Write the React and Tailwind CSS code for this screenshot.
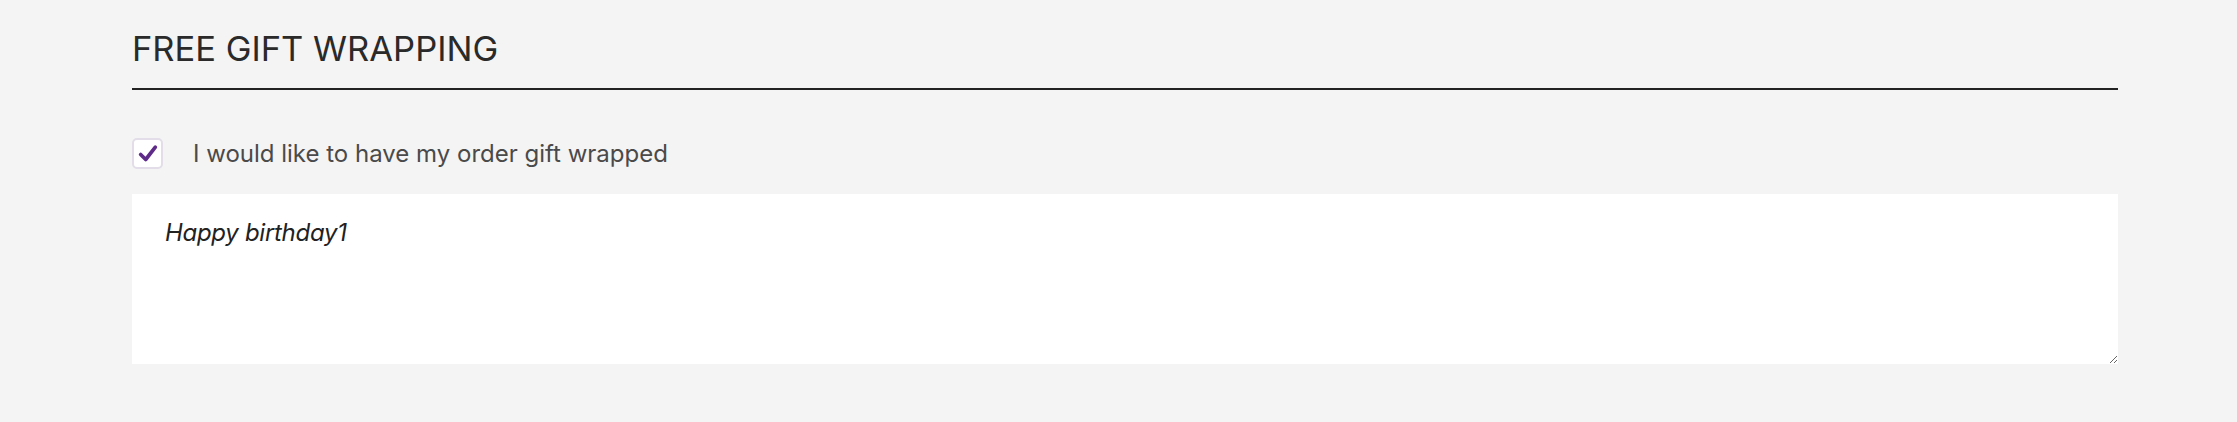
import React, { useState } from "react";

const GiftWrapping = () => {
  const [wrapped, setWrapped] = useState(true);
  const [message, setMessage] = useState("Happy birthday1");

  return (
    <section className="ml-[132px] w-[1986px] pt-[32px] font-['Inter',sans-serif]">
      <h2 className="pb-[22px] border-b-2 border-[#222] text-[34.5px] leading-[34px] font-normal text-[#2a2a2a]">
        FREE GIFT WRAPPING
      </h2>

      <label className="mt-[48px] flex items-center gap-[30px] cursor-pointer">
        <input
          type="checkbox"
          className="sr-only"
          checked={wrapped}
          onChange={(e) => setWrapped(e.target.checked)}
        />
        <span className="flex h-[31px] w-[31px] items-center justify-center rounded-[5px] border-2 border-[#e2dde8] bg-white">
          {wrapped && (
            <svg viewBox="0 0 24 24" className="h-[22px] w-[22px]">
              <path
                d="M4 12.5 L9.5 18 L20 4.5"
                fill="none"
                stroke="#5e2b88"
                strokeWidth="4"
                strokeLinecap="round"
                strokeLinejoin="round"
              />
            </svg>
          )}
        </span>
        <span className="text-[24px] leading-[31px] text-[#4a4a4a]">
          I would like to have my order gift wrapped
        </span>
      </label>

      <textarea
        value={message}
        onChange={(e) => setMessage(e.target.value)}
        className="mt-[25px] block h-[170px] w-full bg-white px-[33px] pt-[22px] text-[24px] leading-[33px] italic tracking-[-0.3px] text-[#222] outline-none"
      />
    </section>
  );
};

export default function App() {
  return (
    <div className="min-h-[422px] bg-[#f4f4f4]">
      <GiftWrapping />
    </div>
  );
}
